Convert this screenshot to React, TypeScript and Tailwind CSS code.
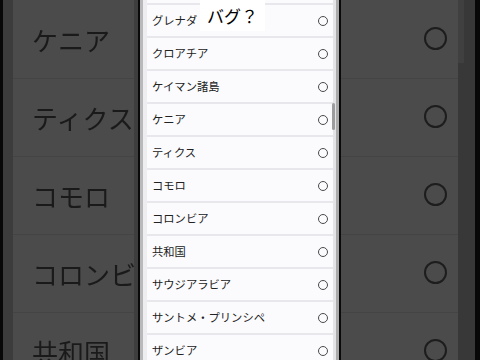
import React from "react";

const rows = [
  "",
  "グレナダ",
  "クロアチア",
  "ケイマン諸島",
  "ケニア",
  "ティクス",
  "コモロ",
  "コロンビア",
  "共和国",
  "サウジアラビア",
  "サントメ・プリンシペ",
  "ザンビア",
];

const bigRows = ["ケニア", "ティクス", "コモロ", "コロンビア", "共和国"];

const font = { fontFamily: '"Noto Sans CJK JP", "Noto Sans", sans-serif' };

function Radio() {
  return <span className="h-[10px] w-[10px] shrink-0 rounded-full border border-[#4a4a4a]" />;
}

export default function App() {
  return (
    <div className="relative flex h-[360px] w-[480px] overflow-hidden bg-black" style={font}>
      {/* left zoomed side */}
      <div className="flex h-full w-[140px] shrink-0">
        <div className="w-[3px] bg-[#080808]" />
        <div className="w-[10px] bg-[#3c3c3c]" />
        <div className="flex w-[121px] flex-col overflow-hidden bg-[#4b4b4b] pt-[1px]">
          {bigRows.map((t, i) => (
            <div key={t} className="flex flex-col">
              <div className="flex h-[77px] items-center whitespace-nowrap pl-[19px] text-[26px] leading-none text-[#1a1a1a] blur-[0.5px]">
                {t}
              </div>
              {i < bigRows.length - 1 && <div className="h-[1px] bg-[#444444]" />}
            </div>
          ))}
        </div>
        <div className="w-[4px] bg-[#3e3e3e]" />
        <div className="w-[2px] bg-[#0a0a0a]" />
      </div>

      {/* center phone list */}
      <div className="relative flex h-full w-[201px] shrink-0">
        <div className="w-[3px] bg-[#b9b9b9]" />
        <div className="w-[4px] bg-[#eeeef1]" />
        <div className="flex w-[186px] flex-col gap-[2px] overflow-hidden bg-[#e8e8ec]">
          {rows.map((t, i) =>
            i === 0 ? (
              <div key={i} className="h-[3px] shrink-0 bg-[#fbfbfd]" />
            ) : (
              <div
                key={i}
                className="flex h-[31px] shrink-0 items-center justify-between bg-[#fbfbfd] pl-[5px] pr-[5px] text-[11.3px] leading-none text-[#222222]"
              >
                <span>{t}</span>
                <Radio />
              </div>
            )
          )}
        </div>
        <div className="w-[3px] bg-[#e4e4e7]" />
        <div className="w-[3px] bg-[#ababab]" />
        <div className="w-[2px] bg-[#0a0a0a]" />
        <div className="absolute left-[192px] top-[103px] h-[27px] w-[3px] rounded-full bg-[#9c9c9c]" />
      </div>

      {/* right zoomed side */}
      <div className="flex h-full w-[139px] shrink-0">
        <div className="flex w-[117px] flex-col overflow-hidden bg-[#4b4b4b] pt-[1px]">
          {bigRows.map((t, i) => (
            <div key={t} className="flex flex-col">
              <div className="flex h-[77px] items-center justify-end pb-[3px] pr-[11px]">
                <span className="h-[23px] w-[23px] rounded-full border-2 border-[#1d1d1d] blur-[0.4px]" />
              </div>
              {i < bigRows.length - 1 && <div className="h-[1px] bg-[#444444]" />}
            </div>
          ))}
        </div>
        <div className="flex w-[17px] flex-col bg-[#383838]">
          <div className="h-[63px] w-[6px] bg-[#404040]" />
        </div>
        <div className="w-[5px] bg-[#080808]" />
      </div>

      {/* overlay caption */}
      <div className="absolute left-[200px] top-0 flex h-[31px] w-[65px] items-center justify-center bg-white text-[17px] leading-none text-black">
        バグ？
      </div>
    </div>
  );
}
